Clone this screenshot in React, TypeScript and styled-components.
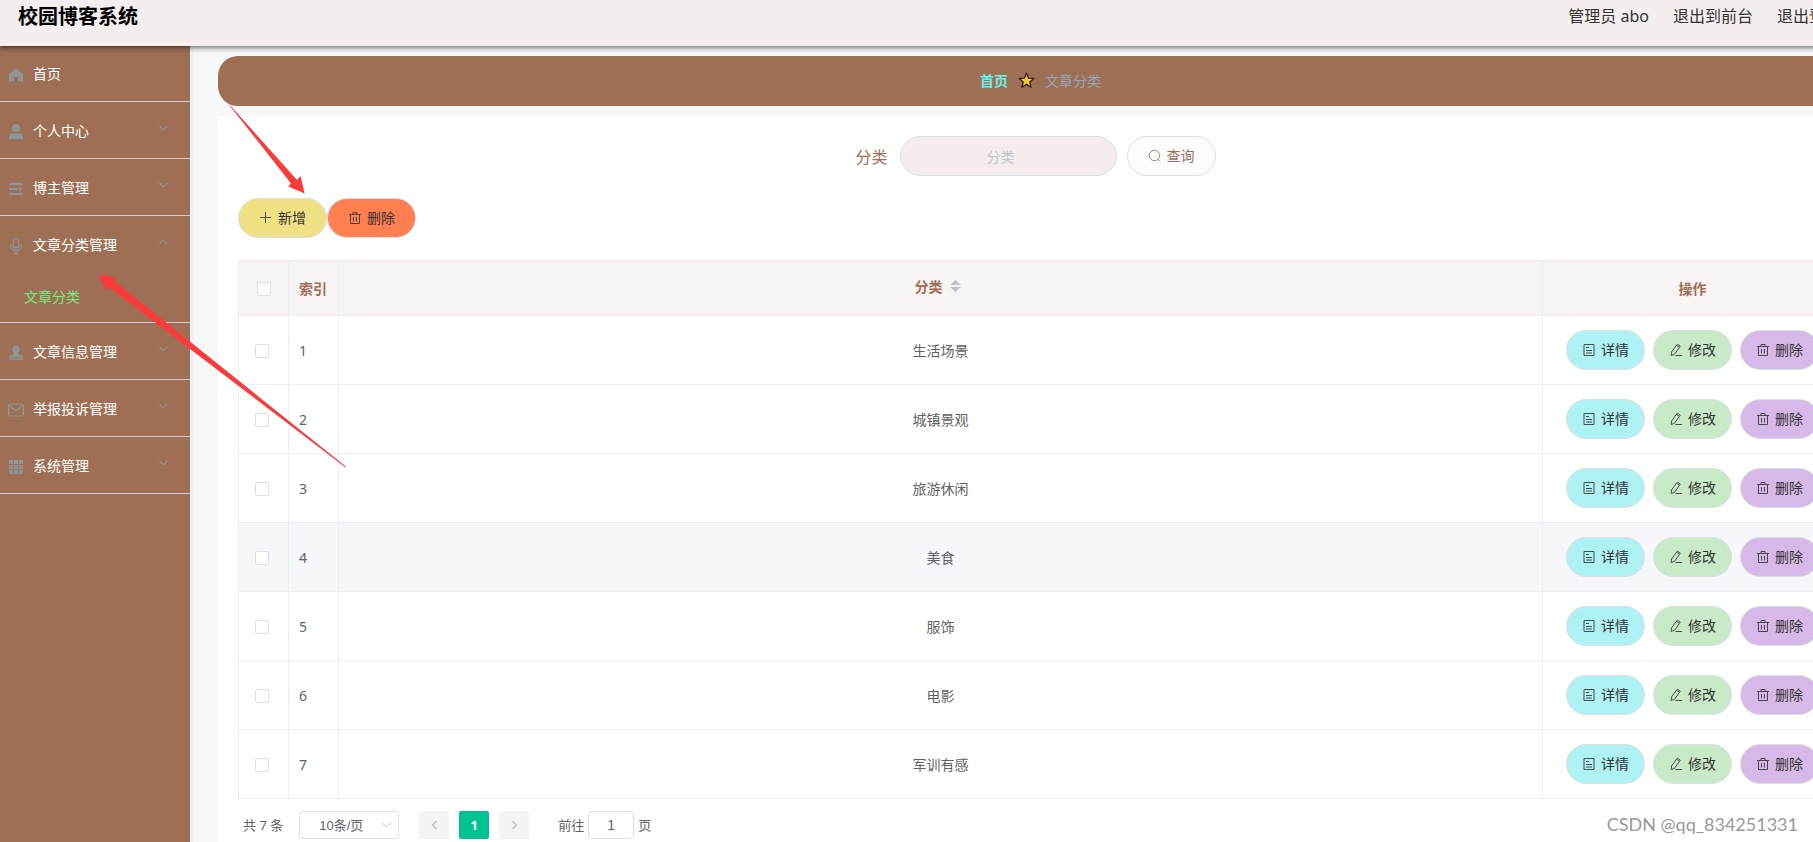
import React from "react";
import styled, { createGlobalStyle } from "styled-components";

const brown = "#9e6f55";
const line = "#ebeef5";
const edge = "#dcdfe6";

const GlobalStyle = createGlobalStyle`
  * { box-sizing: border-box; }
  body {
    margin: 0;
    overflow: hidden;
    background: #f7f8fa;
    color: #606266;
    font-family: "Noto Sans", "Noto Sans CJK SC", sans-serif;
    font-size: 14px;
  }
  button, input, select { font-family: inherit; font-size: 14px; }
  a { text-decoration: none; color: inherit; }
`;

const Page = styled.div`
  display: flex;
  flex-direction: column;
  height: 100vh;
  overflow: hidden;
`;

const Header = styled.header`
  position: relative;
  z-index: 1;
  flex: none;
  display: flex;
  justify-content: space-between;
  height: 45px;
  margin-right: -28px;
  padding: 0 0 0 18px;
  background: #f4eeee;
  box-shadow: 0 1px 0 #f4eeee, 0 2px 6px rgba(0, 0, 0, 0.7);
`;

const Title = styled.h1`
  margin: 0;
  font-size: 20px;
  line-height: 34px;
  font-weight: 700;
  color: #000;
`;

const HeaderLinks = styled.nav`
  display: flex;
  gap: 24px;
  font-size: 16px;
  line-height: 32px;
  color: #333;
  white-space: nowrap;
`;

const Body = styled.div`
  flex: 1;
  min-height: 0;
  display: flex;
`;

const Sidebar = styled.aside`
  flex: none;
  width: 194px;
  background: ${brown};
  border-right: 4px solid #eff1f4;
`;

const MenuGroup = styled.div`
  border-bottom: 1px solid #ccc;
`;

const MenuButton = styled.button`
  display: flex;
  align-items: center;
  gap: 8px;
  width: 100%;
  height: 56px;
  padding: 0 22px 0 7px;
  border: 0;
  background: none;
  color: #fff;
  text-align: left;

  svg { color: #909399; }
  span { flex: 1; }
`;

const MenuIcon = styled.svg`
  flex: none;
  width: 18px;
  height: 18px;
  margin-top: 4px;
`;

const Chevron = styled.svg`
  width: 9px;
  height: 6px;
  margin-bottom: 4px;
`;

const SubLink = styled.a`
  display: block;
  height: 50px;
  padding-left: 24px;
  line-height: 50px;
  color: #70f07a;
`;

const Main = styled.main`
  flex: 1;
  min-width: 0;
  display: flex;
  flex-direction: column;
  gap: 10px;
  margin-right: -50px;
  padding: 11px 0 0 24px;
`;

const Breadcrumb = styled.nav`
  flex: none;
  display: flex;
  align-items: center;
  justify-content: center;
  gap: 10px;
  height: 50px;
  padding-bottom: 2px;
  border-radius: 20px;
  background: ${brown};

  a { color: #66f0ee; font-weight: 700; }
  span { color: #97a8be; }
`;

const Card = styled.section`
  flex: 1;
  padding: 20px 20px 0;
  background: #fff;
`;

const SearchForm = styled.form`
  display: flex;
  justify-content: center;
  align-items: center;
  margin: 0 10px 22px 0;

  label { margin-right: 12px; font-size: 16px; color: ${brown}; }
`;

const SearchInput = styled.input`
  width: 217px;
  height: 40px;
  margin-right: 10px;
  padding: 0 15px 0 0;
  border: 1px solid ${edge};
  border-radius: 20px;
  background: #f5eded;
  text-align: center;
  &::placeholder { color: #c0c4cc; }
`;

const PillButton = styled.button<{ $bg: string; $pad?: number; $color?: string }>`
  display: inline-flex;
  align-items: center;
  gap: 5px;
  height: 40px;
  padding: 0 ${(p) => p.$pad ?? 20}px 2px;
  border: 1px solid ${edge};
  border-radius: 20px;
  background: ${(p) => p.$bg};
  color: ${(p) => p.$color ?? "#333"};
  white-space: nowrap;

  svg { width: 14px; height: 14px; margin-top: 2px; opacity: 0.85; }
`;

const Toolbar = styled.div`
  display: flex;
  margin-bottom: 22px;
`;

const Table = styled.table`
  width: 100%;
  table-layout: fixed;
  border-collapse: separate;
  border-spacing: 0;
  border-top: 1px solid ${line};
  border-left: 1px solid ${line};
`;

const cell = `
  padding: 0 10px;
  border-right: 1px solid ${line};
  border-bottom: 1px solid ${line};
`;

const Th = styled.th<{ $align?: string }>`
  ${cell}
  height: 55px;
  background: #f8f4f3;
  color: ${brown};
  font-weight: 700;
  text-align: ${(p) => p.$align ?? "center"};
`;

const Td = styled.td<{ $align?: string }>`
  ${cell}
  height: 69px;
  text-align: ${(p) => p.$align ?? "center"};
`;

const Row = styled.tr<{ $active: boolean }>`
  background: ${(p) => (p.$active ? "#f5f7fa" : "#fff")};
`;

const Check = styled.input.attrs({ type: "checkbox" })`
  appearance: none;
  display: block;
  width: 14px;
  height: 14px;
  margin: 2px auto 0;
  border: 1px solid ${edge};
  border-radius: 2px;
  background: #fff;
`;

const RowCheck = styled(Check)`
  margin: 2px 6px 0;
`;

const SortLabel = styled.span`
  display: inline-flex;
  align-items: center;
  gap: 7px;
  padding: 0 6px 4px 0;
  svg { width: 11px; height: 12px; }
`;

const RowActions = styled.div`
  display: flex;
  justify-content: center;
  gap: 8px;
`;

const Pagination = styled.div`
  display: flex;
  align-items: center;
  margin-top: 12px;
  padding-left: 5px;
  font-size: 13px;
  line-height: 28px;
`;

const SizeSelect = styled.span`
  display: flex;
  align-items: center;
  width: 100px;
  height: 28px;
  margin: 0 20px 0 16px;
  padding-right: 7px;
  border: 1px solid ${edge};
  border-radius: 3px;

  select {
    appearance: none;
    flex: 1;
    min-width: 0;
    height: 26px;
    padding: 0 0 0 19px;
    border: 0;
    background: none;
    color: #606266;
    font-family: "Liberation Sans", "Noto Sans CJK SC", sans-serif;
    font-size: 13px;
  }
  svg { flex: none; width: 9px; height: 6px; color: #c0c4cc; }
`;

const PageButton = styled.button<{ $active?: boolean }>`
  display: flex;
  align-items: center;
  justify-content: center;
  width: 30px;
  height: 28px;
  margin-right: 10px;
  padding: 0;
  border: 0;
  border-radius: 2px;
  background: ${(p) => (p.$active ? "#00c292" : "#f4f4f5")};
  color: ${(p) => (p.$active ? "#fff" : "#c0c4cc")};
  font-size: 13px;
  font-weight: 700;
  svg { width: 7px; height: 10px; }
`;

const Jump = styled.label`
  display: flex;
  gap: 4px;
  margin-left: 19px;

  input {
    width: 46px;
    height: 28px;
    border: 1px solid ${edge};
    border-radius: 4px;
    color: #606266;
    font-family: "Liberation Sans", sans-serif;
    text-align: center;
  }
`;

const Watermark = styled.div`
  position: absolute;
  right: 15px;
  bottom: 6px;
  font-family: Lato, sans-serif;
  font-size: 18px;
  line-height: 24px;
  color: #999;
  text-shadow: 1px 1px 1px #fff;
`;

const Annotations = styled.svg`
  position: absolute;
  left: 0;
  top: 0;
  width: 360px;
  height: 480px;
  pointer-events: none;
`;

const menuIcons: Record<string, React.ReactNode> = {
  home: <path fill="currentColor" d="M9 2.500 2 8.500v7h5v-4.500h4v4.500h5v-7z" />,
  user: (
    <g fill="currentColor">
      <circle cx="9" cy="5" r="4" />
      <path d="M2 16v-2.500Q2 10.500 5 10.500h8q3 0 3 3V16z" />
    </g>
  ),
  list: (
    <g fill="currentColor">
      <path d="M2 3h14v2H2zM2 8h9v2H2zM2 13h14v2H2zM12 6.500 16 9l-4 2.500z" />
    </g>
  ),
  mic: (
    <g fill="none" stroke="currentColor" strokeWidth="1.300">
      <rect x="6.200" y="1.500" width="5.600" height="9.500" rx="2.800" />
      <path d="M3.700 7.500v1.200a5.300 5.300 0 0 0 10.600 0V7.500M9 14v2.500M6.500 16.500h5" />
    </g>
  ),
  stamp: (
    <path
      fill="currentColor"
      d="M9 1.500a3.700 3.700 0 0 0-3.600 3.700c0 1.600.8 2.500 1.600 3.300v1.700L2 12v1.500h14V12l-5-1.800V8.500c.8-.8 1.600-1.700 1.600-3.300A3.700 3.700 0 0 0 9 1.500zM2 14.500h14v1.200H2z"
    />
  ),
  mail: (
    <g fill="none" stroke="currentColor" strokeWidth="1.200">
      <rect x="1.600" y="3" width="14.800" height="12" rx="1.500" />
      <path d="m2 3.500 5.500 5.300q1.500 1.200 3 0L16 3.500" />
    </g>
  ),
  grid: (
    <path
      fill="currentColor"
      d="M2 2h4v4H2zM7 2h4v4H7zM12 2h4v4h-4zM2 7h4v4H2zM7 7h4v4H7zM12 7h4v4h-4zM2 12h4v4H2zM7 12h4v4H7zM12 12h4v4h-4z"
    />
  ),
};

const DownIcon = ({ up = false }: { up?: boolean }) => (
  <Chevron viewBox="0 0 9 6" fill="none" stroke="currentColor" strokeWidth="1.200">
    <path d={up ? "m.5 5 4-4 4 4" : "m.5 1 4 4 4-4"} />
  </Chevron>
);

const TrashIcon = () => (
  <svg viewBox="0 0 14 14" fill="none" stroke="currentColor">
    <path d="M1 3.500h12M2.500 3.500v9h9v-9M5 3.500v-2h4v2M5.500 6v4.500M8.500 6v4.500" />
  </svg>
);
const PlusIcon = () => (
  <svg viewBox="0 0 14 14" fill="none" stroke="currentColor">
    <path d="M6.500 1v11M1 6.500h11" />
  </svg>
);
const SearchIcon = () => (
  <svg viewBox="0 0 14 14" fill="none" stroke="currentColor">
    <circle cx="6.500" cy="6.500" r="5.200" />
    <path d="m10 10.500 2 2" />
  </svg>
);
const DocIcon = () => (
  <svg viewBox="0 0 14 14" fill="none" stroke="currentColor">
    <path d="M2 1.500h10v11H2zM4 4.500h3M4 7.500h6M4 10h6" />
  </svg>
);
const EditIcon = () => (
  <svg viewBox="0 0 14 14" fill="none" stroke="currentColor">
    <path d="M7.500 2.200 2.500 9l-.3 3.500 3.300-1.200 5-6.900zM8.500 1.200l2.800 2M6.500 12.500H13M7.500 2.200l1-1M10.500 4.400l.8-1.200" />
  </svg>
);

const menu = [
  { icon: "home", label: "首页" },
  { icon: "user", label: "个人中心", fold: true },
  { icon: "list", label: "博主管理", fold: true },
  { icon: "mic", label: "文章分类管理", fold: true, child: "文章分类" },
  { icon: "stamp", label: "文章信息管理", fold: true },
  { icon: "mail", label: "举报投诉管理", fold: true },
  { icon: "grid", label: "系统管理", fold: true },
];

const categories = ["生活场景", "城镇景观", "旅游休闲", "美食", "服饰", "电影", "军训有感"];

export default function App() {
  return (
    <Page>
      <GlobalStyle />
      <Header>
        <Title>校园博客系统</Title>
        <HeaderLinks>
          <span>管理员 abo</span>
          <a href="#front">退出到前台</a>
          <a href="#logout">退出登录</a>
        </HeaderLinks>
      </Header>
      <Body>
        <Sidebar>
          {menu.map((m) => (
            <MenuGroup key={m.label}>
              <MenuButton type="button" aria-expanded={m.fold ? !!m.child : undefined}>
                <MenuIcon viewBox="0 0 18 18">{menuIcons[m.icon]}</MenuIcon>
                <span>{m.label}</span>
                {m.fold && <DownIcon up={!!m.child} />}
              </MenuButton>
              {m.child && <SubLink href="#category">{m.child}</SubLink>}
            </MenuGroup>
          ))}
        </Sidebar>
        <Main>
          <Breadcrumb>
            <a href="#home">首页</a>
            <svg width="17" height="17" viewBox="0 0 17 17">
              <path
                d="m8.500 1.200 2 4.900 5.300.4-4 3.500 1.200 5.300-4.500-2.900L4 15.300l1.200-5.300-4-3.500 5.300-.4z"
                fill="#fdc236"
                stroke="#2b2118"
                strokeWidth="1.300"
                strokeLinejoin="round"
              />
            </svg>
            <span>文章分类</span>
          </Breadcrumb>
          <Card>
            <SearchForm onSubmit={(e) => e.preventDefault()}>
              <label htmlFor="category">分类</label>
              <SearchInput id="category" placeholder="分类" />
              <PillButton type="submit" $bg="#fcfcfc" $color={brown}>
                <SearchIcon />
                查询
              </PillButton>
            </SearchForm>
            <Toolbar>
              <PillButton type="button" $bg="#f0e184">
                <PlusIcon />
                新增
              </PillButton>
              <PillButton type="button" $bg="#ff7f50">
                <TrashIcon />
                删除
              </PillButton>
            </Toolbar>
            <Table>
              <colgroup>
                <col width="50" />
                <col width="50" />
                <col />
                <col width="300" />
              </colgroup>
              <thead>
                <tr>
                  <Th>
                    <Check aria-label="全选" />
                  </Th>
                  <Th $align="left">索引</Th>
                  <Th>
                    <SortLabel>
                      分类
                      <svg viewBox="0 0 11 12" fill="#c0c4cc">
                        <path d="M5.500 0 11 5H0zM0 7h11l-5.500 5z" />
                      </svg>
                    </SortLabel>
                  </Th>
                  <Th>操作</Th>
                </tr>
              </thead>
              <tbody>
                {categories.map((name, i) => (
                  <Row key={name} $active={i === 3}>
                    <Td>
                      <RowCheck aria-label={name} />
                    </Td>
                    <Td $align="left">{i + 1}</Td>
                    <Td>{name}</Td>
                    <Td>
                      <RowActions>
                        <PillButton type="button" $pad={15} $bg="#aef2f3">
                          <DocIcon />
                          详情
                        </PillButton>
                        <PillButton type="button" $pad={15} $bg="#c8eac9">
                          <EditIcon />
                          修改
                        </PillButton>
                        <PillButton type="button" $pad={15} $bg="#d6b9e8">
                          <TrashIcon />
                          删除
                        </PillButton>
                      </RowActions>
                    </Td>
                  </Row>
                ))}
              </tbody>
            </Table>
            <Pagination>
              <span>共 7 条</span>
              <SizeSelect>
                <select aria-label="每页条数">
                  <option>10条/页</option>
                </select>
                <svg viewBox="0 0 9 6" fill="none" stroke="currentColor">
                  <path d="m.5 1 4 4 4-4" />
                </svg>
              </SizeSelect>
              <PageButton type="button" aria-label="上一页">
                <svg viewBox="0 0 7 10" fill="none" stroke="currentColor" strokeWidth="1.500">
                  <path d="M5.500 1 1.500 5l4 4" />
                </svg>
              </PageButton>
              <PageButton type="button" $active>
                1
              </PageButton>
              <PageButton type="button" aria-label="下一页">
                <svg viewBox="0 0 7 10" fill="none" stroke="currentColor" strokeWidth="1.500">
                  <path d="m1.500 1 4 4-4 4" />
                </svg>
              </PageButton>
              <Jump>
                前往
                <input defaultValue="1" />
                页
              </Jump>
            </Pagination>
          </Card>
        </Main>
      </Body>
      <Annotations viewBox="0 0 360 480" fill="#fb3b3a">
        <path d="M224.500 99 297 180l3.500-4 4.200 17.500-16.400-7 2.700-3z" />
        <path d="M98.300 274l17.700 4-1.700 3L345.800 466.500l-.6.800L109.300 287.500 106 290z" />
      </Annotations>
      <Watermark>CSDN @qq_834251331</Watermark>
    </Page>
  );
}
